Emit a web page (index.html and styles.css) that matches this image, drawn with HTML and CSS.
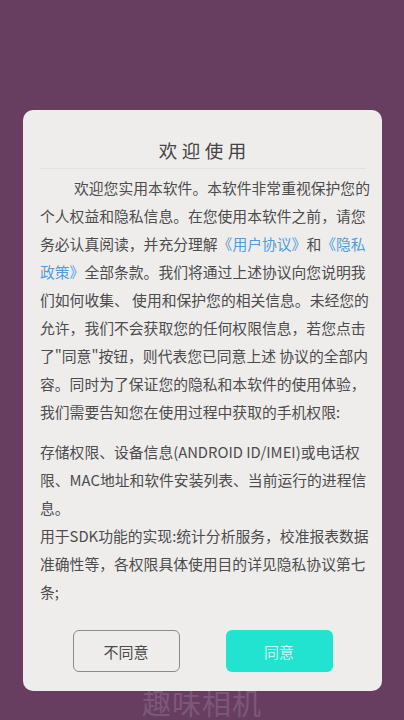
FILE: index.html
```html
<!DOCTYPE html>
<html lang="zh-CN">
<head>
<meta charset="utf-8">
<title>欢迎使用</title>
<link rel="stylesheet" href="styles.css">
</head>
<body>
<div class="screen">
  <div class="splash">
    <div class="app-name">趣味相机</div>
  </div>
  <div class="dialog">
    <div class="dialog-title">欢迎使用</div>
    <div class="divider"></div>
    <div class="dialog-body">
      <p class="para first">欢迎您实用本软件。本软件非常重视保护您的<br>个人权益和隐私信息。在您使用本软件之前，请您<br>务必认真阅读，并充分理解<span class="link">《用户协议》</span>和<span class="link">《隐私<br>政策》</span>全部条款。我们将通过上述协议向您说明我<br>们如何收集、 使用和保护您的相关信息。未经您的<br>允许，我们不会获取您的任何权限信息，若您点击<br>了"同意"按钮，则代表您已同意上述 协议的全部内<br>容。同时为了保证您的隐私和本软件的使用体验，<br>我们需要告知您在使用过程中获取的手机权限:</p>
      <p class="para">存储权限、设备信息(ANDROID ID/IMEI)或电话权<br>限、MAC地址和软件安装列表、当前运行的进程信<br>息。<br>用于SDK功能的实现:统计分析服务，校准报表数据<br>准确性等，各权限具体使用目的详见隐私协议第七<br>条;</p>
    </div>
    <div class="actions">
      <button class="btn btn-outline">不同意</button>
      <button class="btn btn-primary">同意</button>
    </div>
  </div>
</div>
</body>
</html>
```
FILE: styles.css
```css
* { box-sizing: border-box; }
html, body {
  margin: 0;
  padding: 0;
  width: 404px;
  height: 720px;
  overflow: hidden;
  background: #673e60;
  font-family: "Noto Sans CJK SC", "Noto Sans", Roboto, sans-serif;
}
.screen {
  position: relative;
  width: 404px;
  height: 720px;
}
.splash {
  display: flex;
  flex-direction: column;
  align-items: center;
  padding-top: 684px;
}
.app-name {
  font-size: 29px;
  line-height: 36px;
  color: #7c5878;
  letter-spacing: 1px;
}
.dialog {
  position: absolute;
  left: 23px;
  top: 110px;
  width: 359px;
  height: 581px;
  background: #efedec;
  border-radius: 10px;
  display: flex;
  flex-direction: column;
}
.dialog-title {
  padding-top: 28px;
  line-height: 24px;
  font-size: 18.5px;
  letter-spacing: 4.5px;
  text-indent: 4.5px;
  text-align: center;
  color: #444444;
  margin-bottom: 6px;
}
.divider {
  height: 1px;
  margin: 0 16px 0 17px;
  background: #e3e1e0;
}
.dialog-body {
  padding: 5px 10px 0 17px;
  color: #4c4c4c;
  font-size: 14.8px;
  line-height: 28px;
}
.para {
  margin: 0;
  white-space: nowrap;
}
.para + .para {
  margin-top: 12px;
}
.para.first {
  text-indent: 34px;
}
.link {
  color: #4d9de0;
}
.actions {
  margin-top: auto;
  padding-bottom: 19px;
  display: flex;
  justify-content: center;
  gap: 46px;
}
.btn {
  width: 107px;
  height: 42px;
  border-radius: 6px;
  font-family: inherit;
  font-size: 15px;
  padding: 0;
}
.btn-outline {
  background: #efedec;
  border: 1.5px solid #8a8a8a;
  color: #4a4a4a;
}
.btn-primary {
  background: #22e3d0;
  border: none;
  color: #c9f6f1;
}
```
